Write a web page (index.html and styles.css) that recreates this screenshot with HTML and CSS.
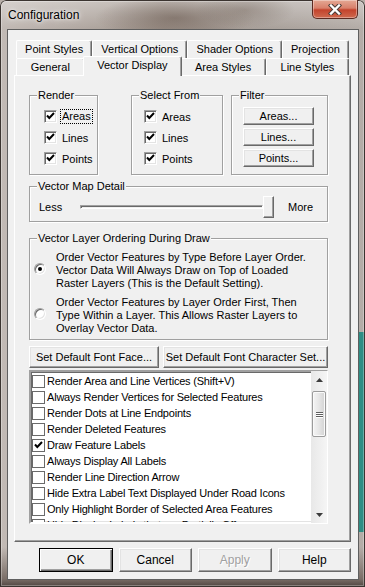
FILE: index.html
```html
<!DOCTYPE html>
<html lang="en">
<head>
    <meta charset="UTF-8">
    <meta name="viewport" content="width=device-width, initial-scale=1.0">
    <title>Configuration</title>
    <link rel="stylesheet" href="styles.css">
</head>
<body>
    <div class="window">
        <div class="titlebar">
            <span class="title">Configuration</span>
            <div class="close">
                <svg width="14" height="11" viewBox="0 0 14 11">
                    <path d="M3 1.5 L11 9.5 M11 1.5 L3 9.5" stroke="#4b3c37" stroke-width="4.4" stroke-linecap="square"/>
                    <path d="M3 1.5 L11 9.5 M11 1.5 L3 9.5" stroke="#fff" stroke-width="2.4" stroke-linecap="square"/>
                </svg>
            </div>
        </div>
        <div class="client">
            <div class="tabs">
                <div class="tab-row">
                    <div class="tab">Point Styles</div>
                    <div class="tab">Vertical Options</div>
                    <div class="tab">Shader Options</div>
                    <div class="tab">Projection</div>
                </div>
                <div class="tab-row front">
                    <div class="tab">General</div>
                    <div class="tab selected">Vector Display</div>
                    <div class="tab">Area Styles</div>
                    <div class="tab">Line Styles</div>
                </div>
            </div>

            <div class="panel">
                <div class="group-row">
                    <fieldset class="group render">
                        <legend>Render</legend>
                        <div class="group-body">
                            <div class="check"><span class="box"><svg class="tick" width="9" height="9" viewBox="0 0 9 9"><path d="M1 3.5 L3.3 6 L8 1" stroke="#000" stroke-width="2" fill="none"/></svg></span><span class="focus">Areas</span></div>
                            <div class="check"><span class="box"><svg class="tick" width="9" height="9" viewBox="0 0 9 9"><path d="M1 3.5 L3.3 6 L8 1" stroke="#000" stroke-width="2" fill="none"/></svg></span>Lines</div>
                            <div class="check"><span class="box"><svg class="tick" width="9" height="9" viewBox="0 0 9 9"><path d="M1 3.5 L3.3 6 L8 1" stroke="#000" stroke-width="2" fill="none"/></svg></span>Points</div>
                        </div>
                    </fieldset>
                    <fieldset class="group select-from">
                        <legend>Select From</legend>
                        <div class="group-body">
                            <div class="check"><span class="box"><svg class="tick" width="9" height="9" viewBox="0 0 9 9"><path d="M1 3.5 L3.3 6 L8 1" stroke="#000" stroke-width="2" fill="none"/></svg></span>Areas</div>
                            <div class="check"><span class="box"><svg class="tick" width="9" height="9" viewBox="0 0 9 9"><path d="M1 3.5 L3.3 6 L8 1" stroke="#000" stroke-width="2" fill="none"/></svg></span>Lines</div>
                            <div class="check"><span class="box"><svg class="tick" width="9" height="9" viewBox="0 0 9 9"><path d="M1 3.5 L3.3 6 L8 1" stroke="#000" stroke-width="2" fill="none"/></svg></span>Points</div>
                        </div>
                    </fieldset>
                    <fieldset class="group filter">
                        <legend>Filter</legend>
                        <div class="group-body">
                            <button class="btn filter-btn">Areas...</button>
                            <button class="btn filter-btn">Lines...</button>
                            <button class="btn filter-btn">Points...</button>
                        </div>
                    </fieldset>
                </div>

                <fieldset class="group detail">
                    <legend>Vector Map Detail</legend>
                    <div class="group-body">
                        <span class="less">Less</span>
                        <div class="slider">
                            <div class="track"></div>
                            <div class="thumb"></div>
                        </div>
                        <span class="more">More</span>
                    </div>
                </fieldset>

                <fieldset class="group ordering">
                    <legend>Vector Layer Ordering During Draw</legend>
                    <div class="group-body">
                        <div class="radio-option">
                            <span class="radio"><span class="dot"></span></span>
                            <span class="radio-text">Order Vector Features by Type Before Layer Order.<br>Vector Data Will Always Draw on Top of Loaded<br>Raster Layers (This is the Default Setting).</span>
                        </div>
                        <div class="radio-option">
                            <span class="radio"></span>
                            <span class="radio-text">Order Vector Features by Layer Order First, Then<br>Type Within a Layer. This Allows Raster Layers to<br>Overlay Vector Data.</span>
                        </div>
                    </div>
                </fieldset>

                <div class="font-buttons">
                    <button class="btn font-face">Set Default Font Face...</button>
                    <button class="btn font-charset">Set Default Font Character Set...</button>
                </div>

                <div class="listbox">
                    <div class="items">
                        <div class="item"><span class="flat-box"></span>Render Area and Line Vertices (Shift+V)</div>
                        <div class="item"><span class="flat-box"></span>Always Render Vertices for Selected Features</div>
                        <div class="item"><span class="flat-box"></span>Render Dots at Line Endpoints</div>
                        <div class="item"><span class="flat-box"></span>Render Deleted Features</div>
                        <div class="item"><span class="flat-box"><svg width="9" height="9" viewBox="0 0 9 9"><path d="M1 3.5 L3.3 6 L8 1" stroke="#000" stroke-width="2" fill="none"/></svg></span>Draw Feature Labels</div>
                        <div class="item"><span class="flat-box"></span>Always Display All Labels</div>
                        <div class="item"><span class="flat-box"></span>Render Line Direction Arrow</div>
                        <div class="item"><span class="flat-box"></span>Hide Extra Label Text Displayed Under Road Icons</div>
                        <div class="item"><span class="flat-box"></span>Only Highlight Border of Selected Area Features</div>
                        <div class="item"><span class="flat-box"></span>Hide Display Labels that are Partially Offscreen</div>
                    </div>
                    <div class="scrollbar">
                        <div class="arrow-btn"><svg width="7" height="4" viewBox="0 0 7 4"><path d="M0 4 L3.5 0 L7 4 Z" fill="#3c3c3c"/></svg></div>
                        <div class="scroll-thumb">
                            <span class="grip"></span>
                            <span class="grip"></span>
                            <span class="grip"></span>
                        </div>
                        <div class="scroll-track"></div>
                        <div class="arrow-btn"><svg width="7" height="4" viewBox="0 0 7 4"><path d="M0 0 L7 0 L3.5 4 Z" fill="#3c3c3c"/></svg></div>
                    </div>
                </div>
            </div>

            <div class="dialog-buttons">
                <button class="btn dlg default">OK</button>
                <button class="btn dlg">Cancel</button>
                <button class="btn dlg" disabled>Apply</button>
                <button class="btn dlg">Help</button>
            </div>
        </div>
    </div>
</body>
</html>
```

FILE: styles.css
```css
* {
    box-sizing: border-box;
}
body {
    margin: 0;
    font-family: "Liberation Sans", Arial, sans-serif;
    font-size: 11px;
    color: #000;
    background: #b7aea8;
}
.window {
    width: 365px;
    height: 587px;
    display: flex;
    flex-direction: column;
    padding: 0 6px 7px 7px;
    border-radius: 6px 6px 0 0;
    box-shadow: inset 0 0 0 1px #3b3430, inset 0 0 0 2px rgba(255, 255, 255, 0.3);
    background:
        radial-gradient(ellipse 80px 22px at 175px 18px, rgba(95, 78, 68, 0.5), transparent),
        radial-gradient(ellipse 50px 18px at 245px 10px, rgba(110, 95, 85, 0.4), transparent),
        linear-gradient(180deg, rgba(255, 255, 255, 0.35), transparent 28px),
        linear-gradient(#2f8d84, #2f8d84) no-repeat right 1px bottom 55px / 6px 200px,
        linear-gradient(0deg, #4e443f 0, #7a6e67 8px, transparent 40px),
        linear-gradient(90deg, #c2bab5 0%, #a2978f 45%, #aaa29c 75%, #b5ada8 100%);
}
.titlebar {
    height: 29px;
    margin: 0 -6px 0 -7px;
    display: flex;
    align-items: flex-start;
    padding-left: 8px;
}
.title {
    margin-top: 8px;
    font-size: 12px;
    line-height: 14px;
    color: #000;
    text-shadow: 0 0 6px rgba(255, 255, 255, 0.9), 0 0 3px rgba(255, 255, 255, 0.8);
}
.close {
    margin-left: auto;
    margin-right: 7px;
    width: 46px;
    height: 19px;
    display: flex;
    align-items: center;
    justify-content: center;
    border: 1px solid #5b2b22;
    border-top: none;
    border-radius: 0 0 5px 5px;
    background: linear-gradient(#e4a894 0%, #d8806b 45%, #c3432c 55%, #cf6a4f 100%);
    box-shadow: inset 0 0 0 1px rgba(255, 255, 255, 0.35);
}
.client {
    flex: 1;
    display: flex;
    flex-direction: column;
    background: #f0f0f0;
    border: 1px solid #5f5f5f;
    padding: 10px 7px 0 6px;
}

/* tabs */
.tabs {
    margin: 0 2px;
}
.tab-row {
    display: flex;
    height: 18px;
}
.tab-row.front {
    height: 17px;
}
.tab {
    flex: 1 0 auto;
    text-align: center;
    line-height: 17px;
    background: #f0f0f0;
    border-top: 1px solid #fff;
    border-left: 1px solid #fff;
    border-right: 1px solid #696969;
    box-shadow: inset -1px 0 #a0a0a0;
    border-radius: 2px 2px 0 0;
}
.tab.selected {
    position: relative;
    z-index: 1;
    margin: -2px -2px 0;
    height: 20px;
    line-height: 16px;
}

/* panel */
.panel {
    height: 467px;
    border: 1px solid;
    border-color: #fff #696969 #696969 #fff;
    box-shadow: inset -1px -1px #a0a0a0;
    padding: 13px 22px 0 14px;
}
.group {
    margin: 0;
    padding: 0;
    min-width: 0;
    border: 1px solid #a0a0a0;
    box-shadow: inset 1px 1px #fff, 1px 1px #fff;
}
.group legend {
    margin-left: 7px;
    padding: 0 1px;
    line-height: 13px;
    background: #f0f0f0;
}
.group-row {
    display: flex;
}
.render {
    width: 69px;
}
.select-from {
    width: 92px;
    margin-left: 33px;
}
.filter {
    width: 97px;
    margin-left: 8px;
}
.render .group-body {
    padding: 4px 0 5px 14px;
}
.select-from .group-body {
    padding: 4px 0 5px 12px;
}
.check {
    height: 21px;
    display: flex;
    align-items: center;
}
.box {
    width: 13px;
    height: 13px;
    margin-right: 5px;
    display: flex;
    align-items: center;
    justify-content: center;
    background: #fff;
    border: 1px solid;
    border-color: #a0a0a0 #fff #fff #a0a0a0;
    box-shadow: inset 1px 1px #696969, inset -1px -1px #e3e3e3;
}
.focus {
    outline: 1px dotted #000;
    padding: 0 1px;
    margin-left: -1px;
    line-height: 13px;
}
.filter .group-body {
    padding: 5px 0 0 11px;
    display: flex;
    flex-direction: column;
    gap: 3px;
}
.btn {
    font-family: inherit;
    font-size: 11px;
    color: #000;
    background: #f0f0f0;
    border: 1px solid;
    border-color: #fff #696969 #696969 #fff;
    box-shadow: inset -1px -1px #a0a0a0, inset 1px 1px #e3e3e3;
    padding: 0;
    border-radius: 0;
}
.filter-btn {
    width: 71px;
    height: 18px;
}

/* slider */
.detail {
    margin-top: 5px;
}
.detail .group-body {
    height: 28px;
    display: flex;
    align-items: center;
}
.less {
    padding-left: 9px;
    box-sizing: content-box;
    width: 41px;
}
.slider {
    width: 194px;
    display: flex;
    align-items: center;
}
.track {
    flex: 1;
    height: 4px;
    border: 1px solid;
    border-color: #a0a0a0 #fff #fff #a0a0a0;
    box-shadow: inset 1px 1px #696969;
}
.thumb {
    width: 11px;
    height: 22px;
    background: #f0f0f0;
    border: 1px solid;
    border-color: #fff #696969 #696969 #fff;
    box-shadow: inset -1px -1px #a0a0a0;
}
.more {
    margin-left: 14px;
}

/* radios */
.ordering {
    margin-top: 10px;
}
.ordering .group-body {
    padding: 6px 0 4px 4px;
    display: flex;
    flex-direction: column;
    gap: 6px;
}
.radio-option {
    display: flex;
    align-items: center;
}
.radio {
    width: 12px;
    height: 12px;
    margin-right: 10px;
    margin-top: -4px;
    border-radius: 50%;
    background: #fff;
    border: 1px solid;
    border-color: #a0a0a0 #fff #fff #a0a0a0;
    box-shadow: inset 1px 1px #696969, inset -1px -1px #e3e3e3;
    display: flex;
    align-items: center;
    justify-content: center;
}
.dot {
    width: 4px;
    height: 4px;
    border-radius: 50%;
    background: #000;
}
.radio-text {
    line-height: 13px;
}

/* font buttons */
.font-buttons {
    display: flex;
    gap: 4px;
    margin-top: 6px;
}
.font-buttons .btn {
    height: 22px;
}
.font-face {
    width: 130px;
}
.font-charset {
    flex: 1;
}

/* list */
.listbox {
    margin-top: 2px;
    height: 154px;
    display: flex;
    background: #fff;
    border: 2px solid;
    border-color: #a0a0a0 #fff #fff #a0a0a0;
    box-shadow: inset 1px 1px #696969, inset -1px -1px #e3e3e3;
}
.items {
    flex: 1;
    overflow: hidden;
    padding: 1px 0 0 1px;
    white-space: nowrap;
    letter-spacing: -0.2px;
}
.item {
    height: 16px;
    display: flex;
    align-items: center;
}
.flat-box {
    width: 13px;
    height: 13px;
    margin-right: 2px;
    border: 1px solid #6a6a6a;
    background: #fff;
    display: flex;
    align-items: center;
    justify-content: center;
}
.scrollbar {
    width: 16px;
    display: flex;
    flex-direction: column;
    background: linear-gradient(90deg, #e8e8e8, #f5f5f5);
    margin: -1px -1px -1px 0;
}
.arrow-btn {
    height: 17px;
    display: flex;
    align-items: center;
    justify-content: center;
}
.scroll-thumb {
    height: 46px;
    margin: 3px 1px 0;
    border: 1px solid #9b9b9b;
    border-radius: 2px;
    background: linear-gradient(90deg, #f4f4f4, #e6e6e6 50%, #d3d3d3);
    box-shadow: inset 0 0 0 1px #fafafa;
    display: flex;
    flex-direction: column;
    align-items: center;
    justify-content: center;
    gap: 1px;
}
.grip {
    width: 7px;
    height: 1px;
    background: #5f5f5f;
    box-shadow: 0 1px #fff;
}
.scroll-track {
    flex: 1;
}

/* bottom buttons */
.dialog-buttons {
    display: flex;
    gap: 6px;
    margin-top: 6px;
    padding-left: 25px;
}
.dlg {
    width: 75px;
    height: 24px;
    font-size: 12px;
}
.dlg.default {
    outline: 1px solid #000;
    outline-offset: -1px;
    border-color: #000;
    box-shadow: inset 1px 1px #fff, inset -1px -1px #696969, inset -2px -2px #a0a0a0;
}
.dlg:disabled {
    color: #a0a0a0;
    text-shadow: 1px 1px #fff;
}
```
